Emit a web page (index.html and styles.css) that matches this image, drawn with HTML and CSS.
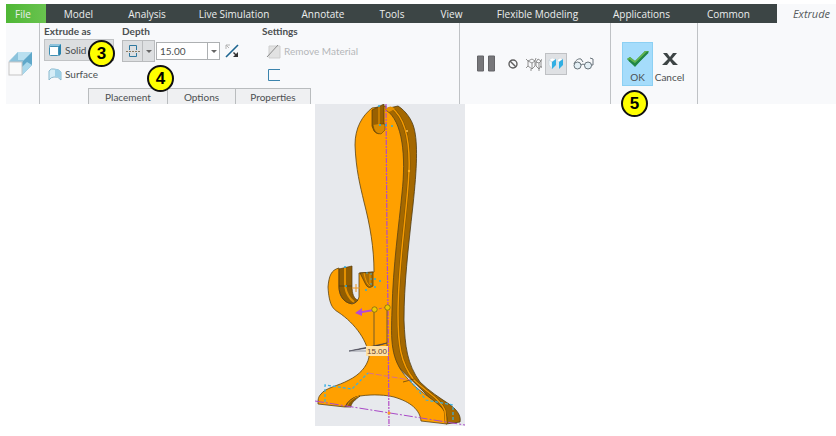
FILE: index.html
```html
<!DOCTYPE html>
<html lang="en">
<head>
<meta charset="utf-8">
<title>Extrude</title>
<link rel="stylesheet" href="styles.css">
</head>
<body>
<header class="ribbon">
  <nav class="tabs">
    <a class="tab file" href="#">File</a>
    <a class="tab" href="#">Model</a>
    <a class="tab" href="#">Analysis</a>
    <a class="tab" href="#">Live Simulation</a>
    <a class="tab" href="#">Annotate</a>
    <a class="tab" href="#">Tools</a>
    <a class="tab" href="#">View</a>
    <a class="tab" href="#">Flexible Modeling</a>
    <a class="tab" href="#">Applications</a>
    <a class="tab common" href="#">Common</a>
    <a class="tab current" href="#">Extrude</a>
  </nav>
  <div class="panel">
    <div class="feature">
      <svg width="26" height="26" viewBox="0 0 26 26">
        <path d="M2 10 11 1H25V14L15 24H2Z" fill="#d9eef8"/>
        <path d="M11 1V10H2Z" fill="#a9d2e4"/>
        <path d="M11 1H25L15 11H2Z" fill="#8cc3dc"/>
        <path d="M11 1H25L17 9H11Z" fill="#b9e0f0"/>
        <path d="M25 1V14L15 24V11Z" fill="#5fa8ca"/>
        <path d="M25 14 15 24V16L20 11Z" fill="#a8d8ec"/>
        <rect x="2" y="11" width="13" height="13" fill="#fafafa" stroke="#c5c5c5"/>
      </svg>
    </div>
    <div class="dashboard">
      <div class="settings">
        <section class="group">
          <h2>Extrude as</h2>
          <button class="option selected" type="button">
            <svg width="14" height="14" viewBox="0 0 14 14"><path d="M1 3 3 1H13V11L11 13Z" fill="#2a83ad"/><path d="M1 3 3 1H13L11 3Z" fill="#8fc3dc"/><rect x="1.5" y="3.5" width="9" height="9" rx="1" fill="#fff" stroke="#3f8fb4"/></svg>
            Solid
          </button>
          <button class="option" type="button">
            <svg width="14" height="14" viewBox="0 0 14 14"><path d="M1 4Q3 1 6 2 11 2 13 5V13Q10 9 6 10 3 10 1 13Z" fill="#d5edf7" stroke="#8bb9ce"/><path d="M7 2Q11 2 13 5V12Q10 9 7 10Z" fill="#9bcfe6"/></svg>
            Surface
          </button>
        </section>
        <section class="group">
          <h2>Depth</h2>
          <div class="depth">
            <button class="depth-type" type="button" aria-label="Symmetric depth">
              <svg width="16" height="16" viewBox="0 0 16 16" fill="none" stroke="#2e789f"><path d="M4.500 7V2.500h7V7M4.500 10v3.500h7V10"/><path d="M1 8.500h14" stroke="#8c7b62" stroke-dasharray="2 1"/></svg>
            </button>
            <button class="depth-menu" type="button" aria-label="Depth options"><span class="caret"></span></button>
            <input class="depth-value" type="text" value="15.00" aria-label="Depth value">
            <button class="value-menu" type="button" aria-label="Recent values"><span class="caret"></span></button>
            <button class="flip" type="button" aria-label="Flip direction">
              <svg width="16" height="16" viewBox="0 0 16 16"><path d="M2 14 14 2" stroke="#1d6591" stroke-width="1.600"/><path d="M2 6V2h4M2 2l3 3" fill="none" stroke="#b3b3b3"/><path d="M14 9v5H9l2-2-2-2 1-1 2 2Z" fill="#333"/></svg>
            </button>
          </div>
        </section>
        <section class="group">
          <h2>Settings</h2>
          <button class="option" type="button" disabled>
            <svg width="15" height="15" viewBox="0 0 15 15"><path d="M3 2H14V14H3Z" fill="#e2e2e2" stroke="#cfcfcf"/><path d="M1 13 12 1" stroke="#8c8c8c"/></svg>
            Remove Material
          </button>
          <button class="option" type="button" aria-label="Thicken sketch">
            <svg width="15" height="14" viewBox="0 0 15 14"><path d="M14 1.500H2.500V12.500H14" fill="none" stroke="#3c84ad"/></svg>
          </button>
        </section>
      </div>
      <div class="slides">
        <button type="button">Placement</button>
        <button type="button">Options</button>
        <button type="button">Properties</button>
      </div>
      <span class="step step-solid">3</span>
      <span class="step step-depth">4</span>
    </div>
    <div class="preview">
      <button class="tool" type="button" aria-label="Pause"><svg width="18" height="18" viewBox="0 0 18 18" fill="#77777a" stroke="#656568"><path d="M.5 1h6v15h-6zM11.500 1h6v15h-6z"/></svg></button>
      <button class="tool none" type="button" aria-label="No preview"><svg width="10" height="10" viewBox="0 0 10 10" fill="none" stroke="#5e5e5e" stroke-width="1.400"><circle cx="5" cy="5" r="4"/><path d="m2 2 6 6"/></svg></button>
      <button class="tool" type="button" aria-label="Unattached"><svg width="16" height="14" viewBox="0 0 16 14" fill="none" stroke="#777" stroke-width=".8"><path d="M2 4 6 6 9 4V9L6 12 2 9ZM6 6V12M2 4 6 2 9 4M10 5l3 1 2-2v5l-2 3-3-3ZM13 6V12M10 5 12 2 15 4M0 2l2 2M15 4l1-2M0 11l2-2M15 9l1 2M9 4l1-3M5 12v2M13 12v2"/></svg></button>
      <button class="tool pressed" type="button" aria-label="Attached"><svg width="16" height="12" viewBox="0 0 16 12"><path d="M1 2 4 0 8 1 4 4Z" fill="#fff" stroke="#b8cbd4" stroke-width=".4"/><path d="M1 2 4 4V11L1 7Z" fill="#f5fbfe" stroke="#b8cbd4" stroke-width=".5"/><path d="M4 4 8 1V7L4 11Z" fill="#31afe3"/><path d="m9 2 3-2 3 1-4 3Z" fill="#fff" stroke="#b8cbd4" stroke-width=".4"/><path d="m9 2 2 2v7L9 8Z" fill="#d4edf8"/><path d="m11 4 4-3v6l-4 4Z" fill="#31afe3"/></svg></button>
      <button class="tool glasses" type="button" aria-label="Verify"><svg width="21" height="13" viewBox="0 0 21 13" stroke="#68737a"><circle cx="4.500" cy="8.500" r="3.500" fill="#e3eff5"/><circle cx="15" cy="8.500" r="3.500" fill="#e3eff5"/><path d="M1 7C2 4 5 1 8 2L10 5M8 8Q10 6 12 8M18 8H20V2L17 1" fill="none"/></svg></button>
    </div>
    <div class="confirm">
      <button class="action ok" type="button">
        <svg width="24" height="20" viewBox="0 0 24 20"><path d="M1 10 4 8 9 12 19 2H23L9 18Z" fill="#299456"/><path d="M1 10 4 8 9 12 19 2H23L9 14Z" fill="#62b34c"/><path d="M3 11 9 16 22 3" fill="none" stroke="#218546" stroke-width="2"/></svg>
        OK
      </button>
      <button class="action" type="button">
        <svg width="18" height="20" viewBox="0 0 18 20"><path d="M2 4H6L9 8 12 4H16L11 10 17 16H12L9 12 6 16H1L7 10Z" fill="#3d4445"/></svg>
        Cancel
      </button>
      <span class="step step-ok">5</span>
    </div>
    <div class="rest"></div>
  </div>
</header>
<main class="canvas">
  <svg class="model" width="150" height="322" viewBox="315 104 150 322" role="img" aria-label="Extruded stand">
    <rect x="315" y="104" width="150" height="322" fill="#e7e9ed"/>
    <path d="M385 109 398 106C406 111 412 120 414 128 418 143 417 168 413 205 408 250 404 285 404 320 405 346 407 364 420 382 429 391 440 398 449 404 459 411 461 417 460 422L446 424Q440 410 425 393L391 360 388 230Z" fill="#a46800" stroke="#4e3a12" stroke-width=".8"/>
    <path d="M372 108C362 116 355 128 355 145 356 170 360 185 364 202 370 225 374 248 374 272L359 273V297C358 301 356 303 352 304 342 302 339 294 339 287V268C331 270 329 276 328 287 329 305 333 309 338 312 356 324 368 342 369 357 367 367 359 375 349 380 338 386 325 388 321 394 318 397 318 400 318 404L345 407C348 401 353 397 360 396 374 394 386 395 394 397 411 402 420 410 421 421L447 424C448 417 446 412 440 406 429 396 418 391 408 379 390 360 391 340 392 310 393 265 399 225 402 193 406 157 403 121 386 110V106Z" fill="#ffa000" stroke="#5b4214" stroke-width=".8"/>
    <path d="M392 108C407 120 410 144 409 171 407 214 398 264 398 314 398 343 400 363 414 380 425 391 441 399 445 411L446 423" fill="none" stroke="#7c5200" stroke-width="2.500"/>
    <path d="M392 108C407 120 410 144 409 171 407 214 398 264 398 314 398 343 400 363 414 380 425 391 441 399 445 411L446 423" fill="none" stroke="#f69a00" stroke-width="1.500"/>
    <path d="M385 109Q391 104 395 109L389 112Z" fill="#e79200"/>
    <path d="M372 110 384 104V130Q379 137 374 131L372 126Z" fill="#996000" stroke="#4e3a12" stroke-width=".7"/>
    <path d="M373 125Q374 134 381 134L385 130V124H379" fill="#d98a00" stroke="#6b4800" stroke-width=".6"/>
    <path d="M379 106V125" stroke="#f09800"/>
    <path d="M339 269 352 266V286C352 294 354 299 358 300 354 305 348 304 344 300 340 296 339 290 339 286Z" fill="#925d00" stroke="#543a0c" stroke-width=".7"/>
    <path d="M345 268V286Q347 297 354 302" fill="none" stroke="#e39000" stroke-width="2"/>
    <path d="M339 286H352" stroke="#4e3a12" stroke-width=".7"/>
    <path d="M360 273 373 272V286Q368 290 365 283Z" fill="#ab6c00" stroke="#543a0c" stroke-width=".7"/>
    <path d="M364 273Q366 284 370 286M370 274V284" fill="none" stroke="#ef9700"/>
    <path d="M345 407C348 401 353 397 360 396 355 400 351 403 351 407Z" fill="#8c5b00" stroke="#503b12" stroke-width=".7"/>
    <path d="M347 406Q350 399 359 396" fill="none" stroke="#d98a00"/>
    <path d="M403 382 414 379" stroke="#4e3a12" stroke-width=".7"/>
    <path d="M386 104 387 240 388 310 389 426" fill="none" stroke="#b34bc5" stroke-width="1.200" stroke-dasharray="5 1 2 1"/>
    <path d="M315 401 465 425" stroke="#a94ac7" stroke-dasharray="9 2 2 2"/>
    <path d="M368 373 410 380" stroke="#da708b" stroke-dasharray="6 2"/>
    <path d="M325 402V385L352 389 368 373M410 380 426 400 453 405V421" fill="none" stroke="#39afe1" stroke-width="1.200" stroke-dasharray="3 2"/>
    <path d="M366 273H371V285" fill="none" stroke="#40a8cf" stroke-dasharray="2 3"/>
    <g fill="#26ace0"><circle cx="379" cy="106" r="1"/><circle cx="380" cy="125" r="1"/><circle cx="386" cy="125" r="1"/><circle cx="392" cy="126" r="1"/><circle cx="345" cy="267" r="1"/><circle cx="346" cy="286" r="1"/><circle cx="375" cy="279" r="1"/><circle cx="380" cy="281" r="1"/><circle cx="375" cy="287" r="1"/><circle cx="366" cy="290" r="1"/></g>
    <path d="M352 288H360M356 284V292" stroke="#e69422"/>
    <circle cx="407" cy="131" r="1" fill="#ffc14a"/><circle cx="409" cy="171" r="1.200" fill="#ffb01e"/>
    <path d="M374 310V346M387 308V347" stroke="#765b28"/>
    <path d="M374 310 387 307" stroke="#c45474" stroke-dasharray="3 2"/>
    <path d="M355 313 362 308V311L374 309V311L362 313V316Z" fill="#b34bd8"/>
    <g fill="#efc900" stroke="#7c6a14" stroke-width=".8"><circle cx="374.500" cy="309.500" r="2.700"/><circle cx="387.500" cy="307.500" r="2.700"/></g>
    <path d="M349 351 387 343 374 347Z" fill="#33333e" stroke="#424250" stroke-width=".6"/>
    <path d="M349 351H366" stroke="#777985" stroke-width=".7"/>
    <rect x="366" y="346" width="22" height="10" fill="#ffe0a3"/>
    <text x="367" y="354" class="dimension">15.00</text>
    <circle cx="389" cy="413" r="1.500" fill="#ff9c23"/>
  </svg>
</main>
</body>
</html>
```
FILE: styles.css
```css
* { box-sizing: border-box; }

body {
  margin: 0;
  padding: 4px 0 0 6px;
  background: #fff;
  color: #4b4f51;
  font-family: "Open Sans", "Noto Sans", sans-serif;
  font-size: 10px;
  line-height: 14px;
}

button, input {
  margin: 0;
  padding: 0;
  border: 0;
  background: none;
  color: inherit;
  font: inherit;
}

svg { display: block; flex: none; }

.tabs {
  display: grid;
  grid-template-columns: 40fr 65fr 72fr 102fr 76fr 62fr 57fr 115fr 93fr 89fr 59fr;
  height: 19px;
  background: #3c4545;
}

.tab {
  display: flex;
  align-items: center;
  justify-content: center;
  color: #eceeee;
  text-decoration: none;
  white-space: nowrap;
}

.file {
  padding-right: 6px;
  background: linear-gradient(90deg, #4fb735, #69c34f);
}

.common { padding-right: 8px; }

.current {
  padding-left: 10px;
  background: #f8f9fb;
  color: #555a5c;
  font-size: 11px;
  font-style: italic;
}

.panel {
  display: grid;
  grid-template-columns: 33px 420px 151px 87px 1fr;
  height: 81px;
  background: #f8f9fb;
  font-family: Lato, "Open Sans", sans-serif;
}

.dashboard, .preview, .confirm, .rest {
  border-left: 1px solid #bfc2c5;
}

.feature { padding: 28px 0 0 1px; }

.dashboard {
  position: relative;
  display: flex;
  flex-direction: column;
  justify-content: space-between;
}

.settings {
  display: grid;
  grid-template-columns: 78px 140px 1fr;
  padding: 1px 0 0 4px;
}

h2 {
  margin: 0 0 1px;
  font-size: 10px;
  font-weight: 700;
  line-height: 14px;
}

.option {
  display: flex;
  align-items: center;
  gap: 3px;
  height: 24px;
  padding: 0 4px;
  white-space: nowrap;
}

.option:disabled { color: #b5b7b9; }

.selected {
  width: 70px;
  height: 22px;
  margin: 1px 0;
  padding: 0 3px;
  border: 1px solid #c1c3c5;
  background: #dcdee0;
}

.depth {
  display: flex;
  align-items: center;
  height: 24px;
}

.depth-type, .depth-menu {
  display: grid;
  place-items: center;
  width: 21px;
  height: 22px;
  border: 1px solid #b9bbbd;
  background: #dddfe1;
}

.depth-menu { width: 12px; border-left: 0; }

.caret {
  border: 3px solid transparent;
  border-top-color: #666;
  border-bottom: 0;
}

.depth-value {
  width: 52px;
  height: 18px;
  margin-left: 1px;
  padding-left: 3px;
  border: 1px solid #adb0b2;
  background: #fff;
}

.value-menu {
  display: grid;
  place-items: center;
  width: 12px;
  height: 18px;
  border: 1px solid #adb0b2;
  border-left: 0;
  background: #fff;
}

.flip { margin-left: 4px; }

.slides {
  display: grid;
  grid-template-columns: 79px 68px 76px;
  height: 16px;
  margin-left: 48px;
}

.slides button {
  border: 1px solid #b9bcbe;
  border-width: 1px 0 0 1px;
  background: #eff0f2;
}

.slides button:last-child { border-right-width: 1px; }

.step {
  position: absolute;
  width: 27px;
  height: 27px;
  border: 2px solid #111;
  border-radius: 50%;
  background: #ff0;
  color: #000;
  font: bold 17px/23px "Liberation Sans", sans-serif;
  text-align: center;
}

.step-solid { top: 17px; left: 48px; }
.step-depth { top: 42px; left: 107px; }
.step-ok { top: 67px; left: 10px; }

.preview {
  display: flex;
  align-items: center;
  padding-left: 17px;
}

.tool {
  display: grid;
  place-items: center;
  height: 22px;
}

.none { margin: 0 8px 0 13px; }

.pressed {
  width: 22px;
  margin-left: 3px;
  border: 1px solid #bfc1c4;
  background: #dfe1e4;
}

.glasses { margin-left: 6px; }

.confirm {
  position: relative;
  display: flex;
  align-items: flex-start;
  gap: 1px;
  padding: 19px 0 0 11px;
}

.action {
  display: flex;
  flex-direction: column;
  align-items: center;
  gap: 1px;
  height: 44px;
  min-width: 31px;
  padding-top: 7px;
}

.ok {
  padding-top: 6px;
  border: 1px solid #8cd0f3;
  background: #a5dcfb;
}

.canvas { padding-left: 309px; }

.dimension {
  fill: #68432e;
  font: 8px "Liberation Sans", sans-serif;
}
```
